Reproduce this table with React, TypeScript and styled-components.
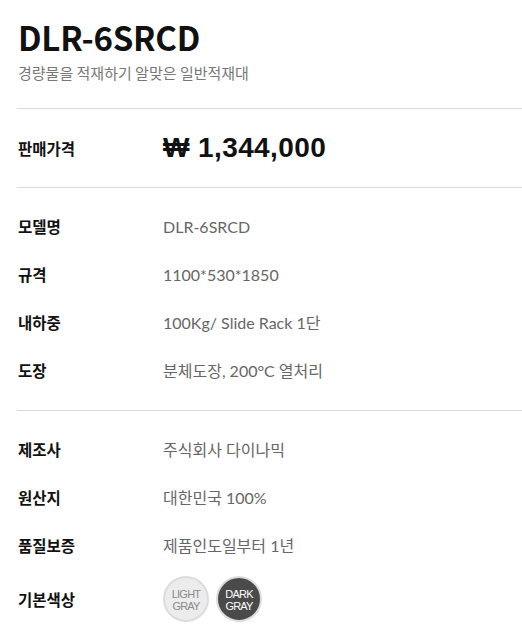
import React from "react";
import styled, { createGlobalStyle } from "styled-components";

const Global = createGlobalStyle`
  html, body { margin: 0; padding: 0; background: #fff; }
  body { font-family: "Noto Sans CJK KR", "Noto Sans", sans-serif; }
`;

const Page = styled.div`
  width: 522px;
  padding-left: 17px;
  box-sizing: border-box;
`;

const Header = styled.header`
  padding: 17px 0 25px 1px;
  border-bottom: 1px solid #d9d9d9;
`;

const Title = styled.h1`
  margin: 0;
  font-family: "Noto Sans CJK KR", sans-serif;
  font-weight: 700;
  font-size: 33px;
  line-height: 40px;
  color: #111;
  letter-spacing: -0.2px;
`;

const Subtitle = styled.p`
  margin: 6px 0 0;
  font-size: 15px;
  line-height: 20px;
  color: #777;
`;

const Section = styled.section<{ $pad?: string; $last?: boolean }>`
  padding: ${(p) => p.$pad ?? "14px 0 16px"};
  border-bottom: ${(p) => (p.$last ? "none" : "1px solid #d9d9d9")};
`;

const Row = styled.div<{ $h?: number }>`
  display: grid;
  grid-template-columns: 145px 1fr;
  align-items: center;
  height: ${(p) => p.$h ?? 48}px;
  padding-left: 1px;
`;

const Label = styled.div`
  font-family: "Noto Sans CJK KR", sans-serif;
  font-weight: 700;
  font-size: 15.5px;
  color: #111;
`;

const Value = styled.div`
  font-family: Lato, "Noto Sans CJK KR", sans-serif;
  font-size: 16px;
  color: #666;
`;

const Price = styled.div`
  font-family: "Liberation Sans", Arial, sans-serif;
  font-weight: 700;
  font-size: 28px;
  letter-spacing: 0.4px;
  color: #111;
`;

const Swatches = styled.div`
  display: flex;
  gap: 7px;
`;

const Swatch = styled.div<{ $dark?: boolean }>`
  width: 46px;
  height: 46px;
  border-radius: 50%;
  box-sizing: border-box;
  border: 2px solid #dcdcdc;
  background: ${(p) => (p.$dark ? "#4a4a4a" : "#ececec")};
  color: ${(p) => (p.$dark ? "#fff" : "#8a8a8a")};
  font-family: "Liberation Sans", Arial, sans-serif;
  font-size: 11px;
  line-height: 12px;
  letter-spacing: -0.8px;
  display: flex;
  align-items: center;
  justify-content: center;
  text-align: center;
  padding-top: 2px;
`;

export default function App() {
  return (
    <Page>
      <Global />
      <Header>
        <Title>DLR-6SRCD</Title>
        <Subtitle>경량물을 적재하기 알맞은 일반적재대</Subtitle>
      </Header>
      <Section $pad="0">
        <Row $h={78}>
          <Label>판매가격</Label>
          <Price>₩ 1,344,000</Price>
        </Row>
      </Section>
      <Section>
        <Row><Label>모델명</Label><Value>DLR-6SRCD</Value></Row>
        <Row><Label>규격</Label><Value>1100*530*1850</Value></Row>
        <Row><Label>내하중</Label><Value>100Kg/ Slide Rack 1단</Value></Row>
        <Row><Label>도장</Label><Value>분체도장, 200°C 열처리</Value></Row>
      </Section>
      <Section $pad="14px 0 0" $last>
        <Row><Label>제조사</Label><Value>주식회사 다이나믹</Value></Row>
        <Row><Label>원산지</Label><Value>대한민국 100%</Value></Row>
        <Row><Label>품질보증</Label><Value>제품인도일부터 1년</Value></Row>
        <Row $h={60}>
          <Label>기본색상</Label>
          <Swatches>
            <Swatch>LIGHT<br />GRAY</Swatch>
            <Swatch $dark>DARK<br />GRAY</Swatch>
          </Swatches>
        </Row>
      </Section>
    </Page>
  );
}
